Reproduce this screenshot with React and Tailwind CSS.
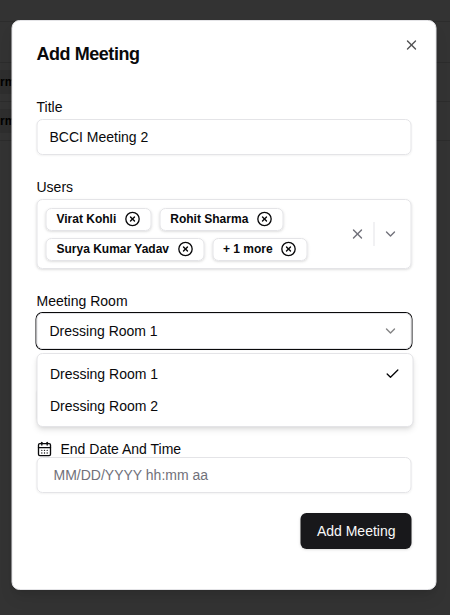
import { CalendarDays, Check, ChevronDown, CircleX, X } from "lucide-react";

const input =
  "flex h-9 w-full items-center rounded-md border border-[#e4e4e7] px-3 shadow-xs";
const label = "flex h-6 items-center text-sm";

function Chip({ children }) {
  return (
    <span className="flex h-[23px] items-center rounded-md border border-[#e4e4e7] px-[10px] text-xs font-semibold shadow">
      {children}
      <CircleX className="ml-2 size-4" />
    </span>
  );
}

function Backdrop() {
  return (
    <div className="h-full text-xs font-bold text-black">
      <div className="h-[22px] border-b border-[#2c2c2c]" />
      <div className="h-[41px] border-b border-[#2c2c2c]" />
      <div className="flex h-[39px] items-center border-b border-[#2c2c2c]">
        <span className="bg-[#2e2e2e] py-1">rm</span>
      </div>
      <div className="flex h-[39px] items-center border-b border-[#2c2c2c]">
        <span className="bg-[#2e2e2e] py-1">rm</span>
      </div>
    </div>
  );
}

export default function App() {
  return (
    <div className="relative h-[615px] w-[450px] overflow-hidden bg-[#333333] font-['Liberation_Sans',Arial,sans-serif] text-[#09090b]">
      <Backdrop />
      <div
        role="dialog"
        className="absolute top-5 left-[224px] h-[570px] w-[425px] -translate-x-1/2 rounded-lg border border-[#e4e4e7] bg-white p-6 shadow-lg"
      >
        <X className="absolute top-4 right-4 size-4 opacity-70" />
        <h2 className="text-lg leading-[18px] font-semibold tracking-tight">Add Meeting</h2>

        <div className="mt-8">
          <div className={label}>Title</div>
          <div className={`${input} text-sm`}>BCCI Meeting 2</div>
        </div>

        <div className="mt-5">
          <div className={label}>Users</div>
          <div className="flex h-[70px] items-center rounded-md border border-[#e4e4e7] pl-2 shadow">
            <div className="flex flex-1 flex-col gap-[7px]">
              <div className="flex gap-2">
                <Chip>Virat Kohli</Chip>
                <Chip>Rohit Sharma</Chip>
              </div>
              <div className="flex gap-2">
                <Chip>Surya Kumar Yadav</Chip>
                <Chip>+ 1 more</Chip>
              </div>
            </div>
            <X className="mr-2 size-4 text-[#71717a]" />
            <div className="mr-2 h-6 w-px bg-[#e4e4e7]" />
            <ChevronDown className="mr-3 size-4 text-[#71717a]" />
          </div>
        </div>

        <div className="relative mt-5">
          <div className={label}>Meeting Room</div>
          <div className={`${input} justify-between text-sm ring-1 ring-[#09090b]`}>
            Dressing Room 1
            <ChevronDown className="size-4 opacity-50" />
          </div>
          <div className="absolute top-16 left-[0.4px] z-10 h-[74px] w-[377px] rounded-md border border-[#e4e4e7] bg-white p-1 text-sm shadow-md">
            <div className="flex h-8 items-center justify-between px-2">
              Dressing Room 1
              <Check className="size-4" />
            </div>
            <div className="flex h-8 items-center px-2">Dressing Room 2</div>
          </div>
        </div>

        <div className="mt-[38px]">
          <div className={input} />
        </div>

        <div className="mt-4">
          <div className="flex h-[18px] items-center gap-2 pt-0.5 text-sm">
            <CalendarDays className="size-4" />
            End Date And Time
          </div>
          <div className={`${input} px-4 text-sm text-[#71717a]`}>MM/DD/YYYY hh:mm aa</div>
        </div>

        <div className="mt-5 flex justify-end">
          <button className="h-9 rounded-md bg-[#18181b] px-4 text-sm font-medium text-[#fafafa] shadow">
            Add Meeting
          </button>
        </div>
      </div>
    </div>
  );
}
